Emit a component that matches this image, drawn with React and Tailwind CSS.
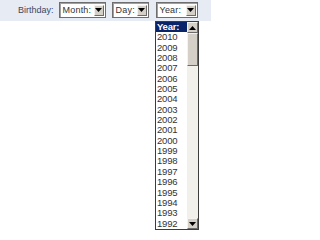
import React from 'react';

const years = [];
for (let y = 2010; y >= 1992; y--) years.push(String(y));

const Arrow = ({ up }) => (
  <svg width="7" height="4" viewBox="0 0 7 4" className="block">
    {up ? <path d="M3.5 0L7 4H0z" fill="#000" /> : <path d="M0 0h7L3.5 4z" fill="#000" />}
  </svg>
);

const DropButton = () => (
  <div className="w-[10px] h-[11px] bg-[#d4d0c8] border border-t-[#f4f3ee] border-l-[#f4f3ee] border-b-[#6b6b6b] border-r-[#6b6b6b] flex items-center justify-center">
    <Arrow />
  </div>
);

const Select = ({ label, width }) => (
  <div
    className={`${width} h-[16px] bg-white border border-[#6e6e6e] shadow-[inset_1px_1px_0_#a0a0a0] flex items-center justify-between pl-[3px] pr-[1px]`}
  >
    <span className="leading-none tracking-[0.2px]">{label}</span>
    <DropButton />
  </div>
);

export default function App() {
  return (
    <div
      className="relative w-[211px] h-[239px] bg-white text-[9px] text-[#333]"
      style={{ fontFamily: '"Liberation Sans", Arial, sans-serif' }}
    >
      <div className="h-[21px] bg-[#e7ebf3] flex items-center pl-[18px] pb-[1px]">
        <span className="text-[#3b4866] mr-[5px] leading-none">Birthday:</span>
        <Select label="Month:" width="w-[47px]" />
        <div className="w-[6px]" />
        <Select label="Day:" width="w-[37px]" />
        <div className="w-[7px]" />
        <Select label="Year:" width="w-[42px]" />
      </div>

      <div className="absolute left-[155px] top-[21px] w-[44px] h-[209px] bg-white border border-[#3c3c3c] flex">
        <div className="flex-1 flex flex-col">
          {['Year:', ...years].map((t, i) => (
            <div
              key={t}
              className={`h-[10.35px] leading-[10.35px] pl-[1px] text-[9.5px] tracking-[-0.2px] ${
                i === 0 ? 'bg-[#0a246a] text-white font-bold' : 'text-[#333]'
              }`}
            >
              {t}
            </div>
          ))}
        </div>
        <div className="w-[11px] flex flex-col bg-[#eeede8]">
          <div className="h-[11px] bg-[#d4d0c8] border border-t-[#f4f3ee] border-l-[#f4f3ee] border-b-[#6b6b6b] border-r-[#6b6b6b] flex items-center justify-center">
            <Arrow up />
          </div>
          <div className="h-[33px] bg-[#d4d0c8] border border-t-[#f4f3ee] border-l-[#f4f3ee] border-b-[#6b6b6b] border-r-[#6b6b6b]" />
          <div className="flex-1 bg-[#f1f0eb]" />
          <div className="h-[11px] bg-[#d4d0c8] border border-t-[#f4f3ee] border-l-[#f4f3ee] border-b-[#6b6b6b] border-r-[#6b6b6b] flex items-center justify-center">
            <Arrow />
          </div>
        </div>
      </div>
    </div>
  );
}
